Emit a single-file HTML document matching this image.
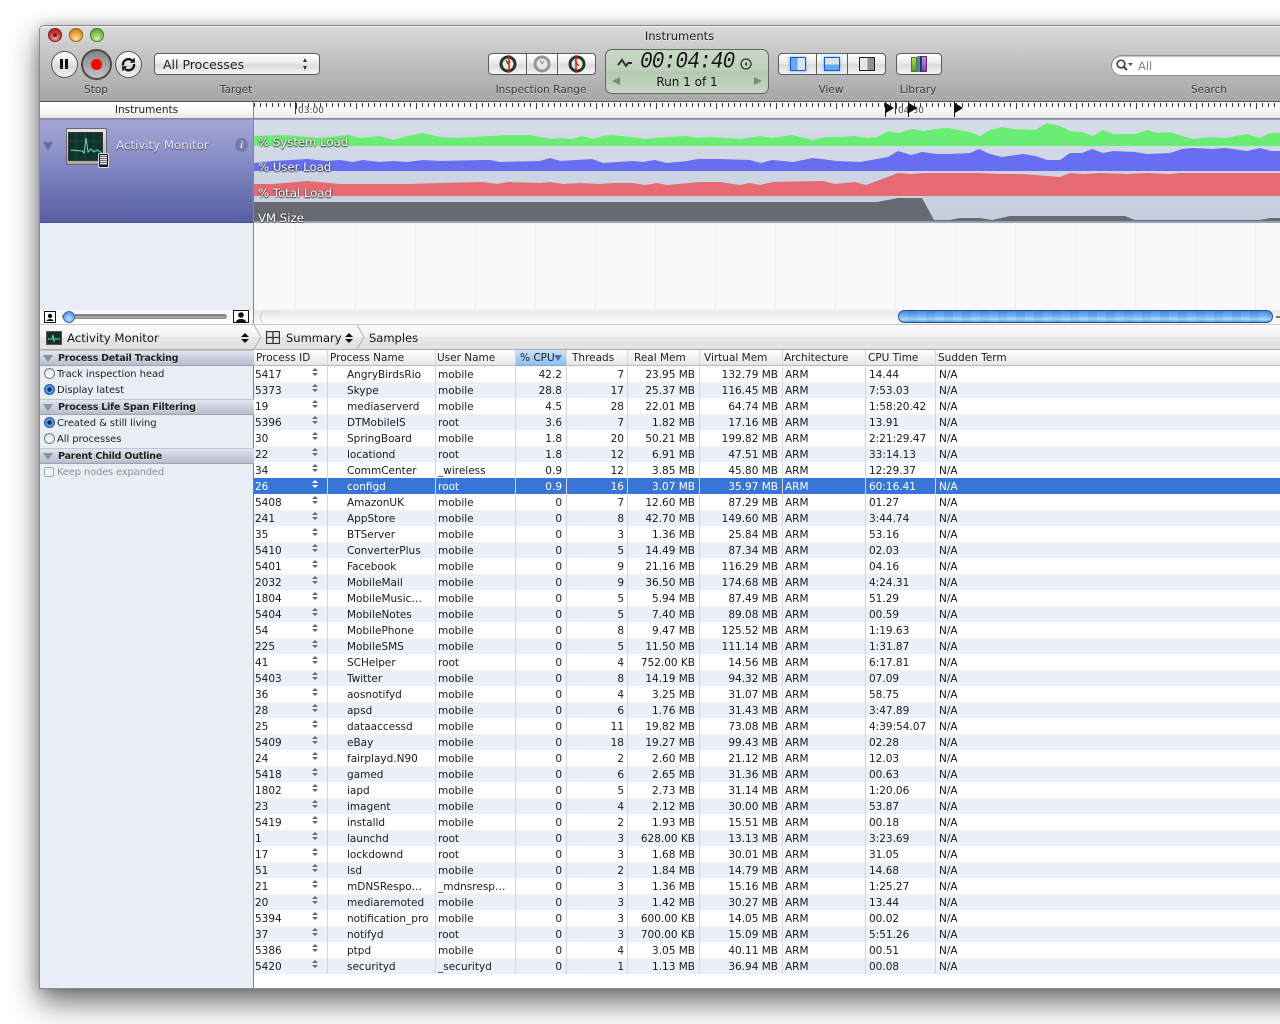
<!DOCTYPE html>
<html><head><meta charset="utf-8"><title>Instruments</title>
<style>
html,body{margin:0;padding:0;width:1280px;height:1024px;overflow:hidden;background:#fff}
body{position:relative;font-family:"DejaVu Sans","Liberation Sans",sans-serif;font-size:10.5px;color:#1a1a1a}
div,span,svg{position:absolute;box-sizing:border-box}
.t{white-space:nowrap;line-height:14px}
.lab{top:83px;font-size:10.5px;color:#3c3c3c;text-shadow:0 1px 0 rgba(255,255,255,.45);text-align:center;white-space:nowrap;line-height:14px}
#win{left:39px;top:25px;width:1300px;height:964px;background:#fff;border:1px solid #8a8a8a;border-radius:5px 0 0 0;box-shadow:0 14px 30px rgba(0,0,0,.55),0 0 12px rgba(0,0,0,.22)}
.btn{background:linear-gradient(#fff,#ececec 45%,#dcdcdc 55%,#f4f4f4);border:1px solid #5c5c5c;border-radius:4px}
.rb{border-radius:50%;background:linear-gradient(#fff,#e4e4e4 50%,#d6d6d6 55%,#f5f5f5);border:1px solid #555}
.gl{font-size:11.7px;color:#fff;white-space:nowrap;line-height:16px;text-shadow:0 1px 1px #333,0 0 2px #444;left:258px}
.sec{left:40px;width:214px;height:16px;background:linear-gradient(#e3e6f0,#c6cad9 60%,#b9bdcd);border-top:1px solid #c2c5d2;border-bottom:1px solid #9ea2b2;font-weight:bold;font-size:9.5px;letter-spacing:-.22px;line-height:15px;padding-left:18px;color:#222;text-shadow:0 1px 0 rgba(255,255,255,.5);white-space:nowrap}
.sec:before{content:"";position:absolute;left:3px;top:4px;border-left:5px solid transparent;border-right:5px solid transparent;border-top:7px solid #8b8e9b}
.it{left:57px;color:#222;font-size:10px;letter-spacing:-.08px;white-space:nowrap;line-height:14px}
.ra{left:44px;width:11px;height:11px;border-radius:50%;border:1px solid #777;background:linear-gradient(#dfdfdf,#fff)}
.ra.on{border-color:#2c5a9e;background:radial-gradient(circle,#10305f 0 2px,#6ea3e3 2.5px,#2f6fc9 100%)}
.h{top:351px;height:15px;font-size:10.5px;line-height:14px;white-space:nowrap;color:#222}
.vl{top:350px;width:1px;height:624px;background:#d6d6d6}
#t{left:254px;top:366px;width:1026px;height:608px;font-size:10.5px}
.r{position:relative;height:16px;width:1026px}
.r:nth-child(even){background:#ebf0fb}
.r.s{background:#3875d7!important;color:#fff}
.r i{position:absolute;top:1px;font-style:normal;line-height:16px;white-space:nowrap}
.r i:nth-child(1){left:1px}
.r i:nth-child(2){left:93px}
.r i:nth-child(3){left:184px}
.r i:nth-child(4){left:258px;width:50px;text-align:right}
.r i:nth-child(5){left:320px;width:50px;text-align:right}
.r i:nth-child(6){left:371px;width:70px;text-align:right}
.r i:nth-child(7){left:444px;width:80px;text-align:right}
.r i:nth-child(8){left:531px}
.r i:nth-child(9){left:615px}
.r i:nth-child(10){left:685px}
.r:before,.r:after{content:"";position:absolute;left:58px;border-left:3px solid transparent;border-right:3px solid transparent}
.r:before{top:2px;border-bottom:3px solid #666}
.r:after{top:7px;border-top:3px solid #666}
.r.s:before{border-bottom-color:#fff}.r.s:after{border-top-color:#fff}
.fl{top:102px;width:12px;height:15px}
</style></head><body>
<div id="win"></div>
<!-- toolbar -->
<div style="left:40px;top:26px;width:1240px;height:76px;background:linear-gradient(#dadada,#c6c6c6 35%,#a6a6a6);border-top:1px solid #eee;border-radius:4px 0 0 0"></div>
<div class="t" style="left:560px;width:239px;top:29px;text-align:center;font-size:11.5px;color:#222;text-shadow:0 1px 0 rgba(255,255,255,.5)">Instruments</div>
<div style="left:48px;top:28px;width:14px;height:14px;border-radius:50%;border:1px solid #7a2222;background:radial-gradient(circle at 50% 75%,#f5a0a0,#c8353a 55%,#8e1e22)"></div>
<div style="left:53px;top:33px;width:4px;height:4px;border-radius:50%;background:#7b2026"></div>
<div style="left:69px;top:28px;width:14px;height:14px;border-radius:50%;border:1px solid #96621c;background:radial-gradient(circle at 50% 80%,#fde1a0,#ee9f35 55%,#b3651d)"></div>
<div style="left:90px;top:28px;width:14px;height:14px;border-radius:50%;border:1px solid #4d7a2c;background:radial-gradient(circle at 50% 80%,#cdf0a5,#82c04e 55%,#4f8a2c)"></div>
<div class="rb" style="left:51px;top:51px;width:27px;height:27px"></div>
<div style="left:60px;top:59px;width:3px;height:10px;background:#111"></div>
<div style="left:65px;top:59px;width:3px;height:10px;background:#111"></div>
<div style="left:81px;top:49px;width:31px;height:31px;border-radius:50%;border:2px solid #4c4c4c;background:linear-gradient(#858585,#a2a2a2 50%,#c4c4c4)"></div>
<div style="left:91px;top:59px;width:11px;height:11px;border-radius:50%;background:#f00"></div>
<div class="rb" style="left:115px;top:51px;width:27px;height:27px"></div>
<svg style="left:115px;top:51px" width="27" height="27" viewBox="0 0 27 27"><path d="M8 14.5a5.5 5.5 0 0 1 9-5" fill="none" stroke="#111" stroke-width="2.4"/><path d="M19 13a5.500 5.500 0 0 1-9 5" fill="none" stroke="#111" stroke-width="2.4"/><path d="M15 12l5-.5-.5-5zM12 15l-5 .5.5 5z" fill="#111"/></svg>
<div class="btn" style="left:154px;top:53px;width:166px;height:22px;border-radius:4px"></div>
<div class="t" style="left:163px;top:58px;font-size:12.5px;color:#222">All Processes</div>
<div style="left:303px;top:58px;border-left:2.500px solid transparent;border-right:2.500px solid transparent;border-bottom:4px solid #333"></div>
<div style="left:303px;top:66px;border-left:2.500px solid transparent;border-right:2.500px solid transparent;border-top:4px solid #333"></div>
<div class="lab" style="left:66px;width:60px">Stop</div>
<div class="lab" style="left:196px;width:80px">Target</div>
<div class="lab" style="left:481px;width:120px">Inspection Range</div>
<div class="lab" style="left:801px;width:60px">View</div>
<div class="lab" style="left:888px;width:60px">Library</div>
<div class="lab" style="left:1169px;width:80px">Search</div>
<!-- inspection -->
<div class="btn" style="left:488px;top:53px;width:108px;height:22px"></div>
<div style="left:526px;top:54px;width:1px;height:20px;background:#5c5c5c"></div>
<div style="left:557px;top:54px;width:1px;height:20px;background:#5c5c5c"></div>
<svg style="left:498px;top:54px" width="90" height="20" viewBox="0 0 90 20">
<circle cx="10" cy="10" r="7" fill="#e8e8e8" stroke="#1f3a2a" stroke-width="3"/><path d="M10 10l-2-4M10 10l2-3" stroke="#333" stroke-width="1.200"/><path d="M11 1v18" stroke="#e01919" stroke-width="1.500"/>
<circle cx="44" cy="10" r="7" fill="#e8e8e8" stroke="#8d9a92" stroke-width="3"/><path d="M44 10l-2-4M44 10l2-3" stroke="#999" stroke-width="1.200"/>
<circle cx="79" cy="10" r="7" fill="#e8e8e8" stroke="#1f3a2a" stroke-width="3"/><path d="M79 10l-2-4M79 10l2 2" stroke="#333" stroke-width="1.200"/><path d="M78 1v18" stroke="#e01919" stroke-width="1.500"/>
</svg>
<!-- LCD -->
<div style="left:605px;top:49px;width:164px;height:45px;border-radius:7px;border:1px solid #666;background:linear-gradient(#c8d9c6,#bed0bb 48%,#b4c8b1 50%,#c6d7c4)"></div>
<div class="t" style="left:640px;top:51px;font-family:'Liberation Mono',monospace;font-style:italic;font-size:21px;line-height:24px;color:#161616;letter-spacing:-.8px;transform:scaleY(1.12)">00:04:40</div>
<svg style="left:617px;top:56px" width="16" height="14" viewBox="0 0 16 14"><path d="M1 9l4-5 4 6 2-3h4" fill="none" stroke="#333" stroke-width="2"/></svg>
<svg style="left:739px;top:57px" width="14" height="14" viewBox="0 0 14 14"><circle cx="7" cy="7" r="5" fill="none" stroke="#333" stroke-width="1.300"/><path d="M8 5v4L5.500 7z" fill="#333"/></svg>
<div class="t" style="left:606px;width:162px;top:75px;text-align:center;font-size:12px;color:#111">Run 1 of 1</div>
<div style="left:612px;top:77px;border-top:4px solid transparent;border-bottom:4px solid transparent;border-right:8px solid #7b8b7c"></div>
<div style="left:754px;top:77px;border-top:4px solid transparent;border-bottom:4px solid transparent;border-left:8px solid #7b8b7c"></div>
<!-- view buttons -->
<div class="btn" style="left:778px;top:53px;width:108px;height:22px"></div>
<div style="left:816px;top:54px;width:1px;height:20px;background:#5c5c5c"></div>
<div style="left:847px;top:54px;width:1px;height:20px;background:#5c5c5c"></div>
<div style="left:790px;top:57px;width:16px;height:14px;border:1px solid #0a5fd6;background:linear-gradient(90deg,#69a9ef 45%,#dce5ef 45%);box-shadow:0 0 3px #5fa8ff"></div>
<div style="left:824px;top:57px;width:16px;height:14px;border:1px solid #0a5fd6;background:linear-gradient(#dce5ef 55%,#69a9ef 55%);box-shadow:0 0 3px #5fa8ff"></div>
<div style="left:859px;top:57px;width:16px;height:14px;border:1px solid #222;background:linear-gradient(90deg,#e8e8e8 55%,#8f8f8f 55%)"></div>
<div class="btn" style="left:896px;top:53px;width:46px;height:22px"></div>
<div style="left:911px;top:57px;width:6px;height:15px;background:linear-gradient(#a8dc5a,#5a9c28);border:1px solid #4d7a22"></div>
<div style="left:917px;top:56px;width:4px;height:16px;background:#4c82c8;border-right:1px solid #234"></div>
<div style="left:921px;top:56px;width:6px;height:16px;background:linear-gradient(#c48ae0,#8b3fb8);border:1px solid #5c2a7c"></div>
<!-- search -->
<div style="left:1111px;top:55px;width:180px;height:21px;background:#fff;border-radius:11px 0 0 11px;border:1px solid #8f8f8f;box-shadow:inset 0 1px 1px #bbb"></div>
<svg style="left:1115px;top:58px" width="20" height="14" viewBox="0 0 20 14"><circle cx="6" cy="6" r="3.800" fill="none" stroke="#444" stroke-width="1.700"/><path d="M9 9l3 3" stroke="#444" stroke-width="2"/><path d="M13 5h5l-2.500 3z" fill="#555"/></svg>
<div class="t" style="left:1138px;top:59px;font-size:11.500px;color:#888">All</div>
<!-- ruler -->
<div style="left:40px;top:101px;width:1240px;height:1px;background:#555"></div>
<div style="left:40px;top:102px;width:213px;height:16px;background:linear-gradient(#fff,#f8f8f8 60%,#e6e6e6)"></div>
<div class="t" style="left:40px;width:213px;top:103px;text-align:center;font-size:10.500px;color:#222">Instruments</div>
<div style="left:253px;top:102px;width:1px;height:17px;background:#888"></div>
<div style="left:254px;top:102px;width:1026px;height:16px;background:repeating-linear-gradient(90deg,#333 0 1px,transparent 1px 6px) 0 1px/100% 4px no-repeat,repeating-linear-gradient(90deg,#333 0 1px,transparent 1px 60px) 42px 1px/100% 6px no-repeat,linear-gradient(#fff,#f8f8f8 60%,#e6e6e6)"></div>
<div style="left:295px;top:102px;width:1px;height:12px;background:#333"></div>
<div style="left:895px;top:102px;width:1px;height:12px;background:#333"></div>
<div class="t" style="left:298px;top:104px;font-size:9px;color:#444">03:00</div>
<div class="t" style="left:898px;top:104px;font-size:9px;color:#444">04:30</div>
<svg class="fl" style="left:885px" viewBox="0 0 12 15"><path d="M.5 0v15" stroke="#111"/><path d="M1 1l8 5-8 5z" fill="#111"/><path d="M1 11l6-3v2l-6 3z" fill="#fff"/></svg>
<svg class="fl" style="left:908px" viewBox="0 0 12 15"><path d="M.5 0v15" stroke="#111"/><path d="M1 1l8 5-8 5z" fill="#111"/><path d="M1 11l6-3v2l-6 3z" fill="#fff"/></svg>
<svg class="fl" style="left:954px" viewBox="0 0 12 15"><path d="M.5 0v15" stroke="#111"/><path d="M1 1l8 5-8 5z" fill="#111"/><path d="M1 11l6-3v2l-6 3z" fill="#fff"/></svg>
<div style="left:40px;top:118px;width:1240px;height:1px;background:#8b8b8b"></div>
<!-- instrument left -->
<div style="left:40px;top:119px;width:213px;height:104px;background:linear-gradient(#a3a7d7,#8a8fc8 35%,#565ea4);border-top:1px solid #8f93c4;border-bottom:1px solid #4a5190"></div>
<div style="left:253px;top:119px;width:1px;height:232px;background:#888"></div>
<div style="left:43px;top:142px;border-left:5px solid transparent;border-right:5px solid transparent;border-top:9px solid #6a6e94"></div>
<div style="left:66px;top:128px;width:41px;height:37px;background:linear-gradient(#e4e4e4,#aaa);border:1px solid #666;border-radius:2px"></div>
<div style="left:68px;top:132px;width:35px;height:29px;background:#10332c;border:1px solid #333"></div>
<svg style="left:68px;top:132px" width="35" height="29" viewBox="0 0 35 29"><path d="M0 9h35M0 19h35M8 0v29M17 0v29M26 0v29" stroke="#2b5a50" stroke-width=".5"/><path d="M3 18l11 1 2 2 2-15 2 14 3-3 3 3 3-2 5 3" fill="none" stroke="#5fe0b8" stroke-width="1"/></svg>
<div style="left:98px;top:153px;width:11px;height:15px;background:#111;border:1px solid #ddd;border-radius:2px"></div>
<div style="left:100px;top:155px;width:7px;height:10px;background:repeating-linear-gradient(#ddd 0 1px,#6b7b90 1px 2px)"></div>
<div class="t" style="left:116px;top:138px;font-size:11.8px;color:#e2e3f0;text-shadow:0 1px 1px #444">Activity Monitor</div>
<div style="left:235px;top:138px;width:13px;height:14px;border-radius:50%;background:#777ba6"></div>
<div class="t" style="left:235px;width:13px;top:138px;text-align:center;font:italic bold 11px/14px 'Liberation Serif',serif;color:#dde">i</div>
<!-- graphs -->
<div style="left:254px;top:119px;width:1026px;height:104px;background:linear-gradient(#d6dde9,#c4cedd);border-top:1px solid #8fa4c8;border-bottom:1px solid #8fa4c8"></div>
<svg style="left:0;top:0" width="1280" height="224" viewBox="0 0 1280 224">
<path fill="#69ee73" d="M254 136L287 135 317 138 350 135 360 138 380 136 393 140 407 136 423 133 440 137 457 138 507 135 530 135 550 139 560 138 572 139 582 136 593 139 603 136 613 135 630 137 645 139 667 137 687 136 698 138 710 137 740 139 760 136 772 138 792 135 813 140 825 137 837 137 855 136 867 138 877 137 888 131 898 133 912 129 923 131 935 129 948 128 970 132 980 136 990 130 1002 127 1013 129 1035 130 1047 123 1060 126 1070 131 1082 132 1093 136 1103 130 1113 134 1136 134 1147 130 1158 133 1170 132 1182 136 1193 139 1213 137 1225 138 1247 134 1260 138 1270 133 1280 133V146H254z"/>
<path fill="#676ef2" d="M254 163L273 161 307 159 327 161 340 160 353 162 363 160 380 162 393 161 407 162 423 160 440 161 483 160 490 160 500 162 540 161 550 158 560 161 592 159 603 163 633 161 643 162 655 160 667 163 687 161 698 159 720 159 750 160 761 163 772 160 793 162 813 158 837 161 860 162 877 159 888 157 898 151 911 155 922 152 937 154 950 154 970 153 979 149 990 154 1002 157 1023 154 1035 156 1047 160 1060 160 1070 153 1082 153 1092 149 1103 153 1113 151 1135 152 1147 154 1170 153 1182 149 1193 148 1213 149 1225 148 1247 151 1260 148 1271 151 1280 151V171H254z"/>
<path fill="#e76a72" d="M254 184L273 184 307 181 340 184 373 184 407 184 440 183 483 182 497 184 508 182 540 183 550 182 563 184 580 183 600 184 613 183 633 183 645 185 657 183 667 185 700 182 720 182 740 185 750 183 760 185 773 182 823 181 835 184 855 182 866 185 877 181 898 173 912 174 923 173 977 173 1003 174 1023 174 1060 177 1070 173 1083 174 1100 173 1127 174 1147 173 1170 174 1180 173 1280 173V196H254z"/>
<path fill="#676a72" d="M254 202H877L898 198 922 198 934 220 950 220 960 218 980 218 992 220 1010 216 1125 216 1135 220 1260 220 1270 218 1280 218V221.500H254z"/>
</svg>
<div class="gl" style="top:134px">% System Load</div>
<div class="gl" style="top:159px">% User Load</div>
<div class="gl" style="top:185px">% Total Load</div>
<div class="gl" style="top:210px">VM Size</div>
<!-- empty area -->
<div style="left:40px;top:223px;width:213px;height:87px;background:#e9edf6"></div>
<div style="left:254px;top:223px;width:1026px;height:87px;background-color:#fbf8fb"></div>
<div style="left:295px;top:223px;width:985px;height:87px;background:repeating-linear-gradient(90deg,#f0edf1 0 1px,#fbf8fb 1px 60px)"></div>
<div style="left:40px;top:310px;width:213px;height:14px;background:linear-gradient(#f6f6f6,#fff)"></div>
<svg style="left:44px;top:311px" width="12" height="12" viewBox="0 0 12 12"><rect x=".5" y=".5" width="11" height="11" fill="#fff" stroke="#111"/><circle cx="6" cy="5" r="2.200" fill="#111"/><path d="M2.500 10c0-2.500 7-2.500 7 0z" fill="#111"/></svg>
<div style="left:62px;top:314px;width:165px;height:5px;border-radius:3px;background:linear-gradient(#777,#bbb);border:1px solid #888"></div>
<div style="left:63px;top:311px;width:12px;height:12px;border-radius:50%;background:radial-gradient(circle at 50% 70%,#bfe0ff,#3e86dc);border:1px solid #3a6bb0"></div>
<svg style="left:233px;top:310px" width="16" height="13" viewBox="0 0 16 13"><rect x=".5" y=".5" width="15" height="12" fill="#fff" stroke="#111"/><circle cx="8" cy="5" r="2.800" fill="#111"/><path d="M3 12c0-4 10-4 10 0z" fill="#111"/></svg>
<div style="left:254px;top:310px;width:1026px;height:14px;background:linear-gradient(#e9e9e9,#fafafa)"></div>
<div style="left:260px;top:310px;width:20px;height:14px;border-radius:7px 0 0 7px;border-left:1px solid #c4c4c4;background:linear-gradient(#e2e2e2,#fff)"></div>
<div style="left:898px;top:310px;width:375px;height:13px;border-radius:7px;border:1px solid #1d4f9c;background:repeating-linear-gradient(90deg,rgba(255,255,255,.05) 0 9px,rgba(20,70,170,.05) 9px 18px),linear-gradient(#3f86de,#6fb0ee 45%,#a9d5f8 75%,#5c9be0)"></div>
<div style="left:1276px;top:316px;width:4px;height:2px;background:#777"></div>
<div style="left:40px;top:324px;width:1240px;height:1px;background:#c8c8c8"></div>
<!-- breadcrumb -->
<div style="left:40px;top:325px;width:1240px;height:25px;background:linear-gradient(#fbfbfb,#f3f3f3 48%,#e6e6e6 50%,#e2e2e2);border-bottom:1px solid #aaa"></div>
<div style="left:46px;top:331px;width:16px;height:14px;background:#16302b;border:1px solid #555"></div>
<svg style="left:46px;top:331px" width="16" height="14" viewBox="0 0 16 14"><path d="M2 8h4l1-4 1 6 1-2h5" fill="none" stroke="#5fe0b8"/></svg>
<div class="t" style="left:67px;top:331px;font-size:11.700px">Activity Monitor</div>
<div style="left:241px;top:333px;border-left:4px solid transparent;border-right:4px solid transparent;border-bottom:4px solid #111"></div>
<div style="left:241px;top:339px;border-left:4px solid transparent;border-right:4px solid transparent;border-top:4px solid #111"></div>
<svg style="left:252px;top:325px" width="120" height="24" viewBox="0 0 120 24"><path d="M2 0l7 12-7 12M105 0l7 12-7 12" fill="none" stroke="#b4b4b4"/></svg>
<svg style="left:266px;top:331px" width="14" height="13" viewBox="0 0 14 13"><path d="M.5.500h13v12H.500zM7 .5v12M.5 6.500h13" fill="#e8e8e8" stroke="#333" stroke-width="1.300"/></svg>
<div class="t" style="left:286px;top:331px;font-size:11.500px">Summary</div>
<div style="left:345px;top:333px;border-left:4px solid transparent;border-right:4px solid transparent;border-bottom:4px solid #111"></div>
<div style="left:345px;top:339px;border-left:4px solid transparent;border-right:4px solid transparent;border-top:4px solid #111"></div>
<div class="t" style="left:369px;top:331px;font-size:11.500px">Samples</div>
<!-- sidebar -->
<div style="left:40px;top:350px;width:213px;height:638px;background:#e9edf6"></div>
<div style="left:253px;top:350px;width:1px;height:638px;background:#808080"></div>
<div class="sec" style="top:350px">Process Detail Tracking</div>
<div class="ra" style="top:368px"></div><div class="it" style="top:368px">Track inspection head</div>
<div class="ra on" style="top:384px"></div><div class="it" style="top:384px">Display latest</div>
<div class="sec" style="top:399px">Process Life Span Filtering</div>
<div class="ra on" style="top:417px"></div><div class="it" style="top:417px">Created &amp; still living</div>
<div class="ra" style="top:433px"></div><div class="it" style="top:433px">All processes</div>
<div class="sec" style="top:448px">Parent Child Outline</div>
<div style="left:44px;top:467px;width:10px;height:10px;border:1px solid #aaa;border-radius:2px;background:#f2f2f2"></div>
<div class="it" style="top:466px;color:#929292;letter-spacing:-.2px">Keep nodes expanded</div>
<!-- header -->
<div style="left:254px;top:350px;width:1026px;height:16px;background:linear-gradient(#fff,#f3f3f3 50%,#e6e6e6);border-bottom:1px solid #b8b8b8"></div>
<div style="left:515px;top:350px;width:51px;height:16px;background:linear-gradient(#cfe3f9,#a9cff4 50%,#8fc0f0);border-bottom:1px solid #7ba7d8"></div>
<div class="h" style="left:256px">Process ID</div>
<div class="h" style="left:330px">Process Name</div>
<div class="h" style="left:437px">User Name</div>
<div class="h" style="left:520px">% CPU</div>
<div style="left:554px;top:355px;border-left:4px solid transparent;border-right:4px solid transparent;border-top:6px solid #4a70a0"></div>
<div class="h" style="left:572px">Threads</div>
<div class="h" style="left:634px">Real Mem</div>
<div class="h" style="left:704px">Virtual Mem</div>
<div class="h" style="left:784px">Architecture</div>
<div class="h" style="left:868px">CPU Time</div>
<div class="h" style="left:938px">Sudden Term</div>
<!-- table -->
<div id="t">
<div class="r"><i>5417</i><i>AngryBirdsRio</i><i>mobile</i><i>42.2</i><i>7</i><i>23.95 MB</i><i>132.79 MB</i><i>ARM</i><i>14.44</i><i>N/A</i></div>
<div class="r"><i>5373</i><i>Skype</i><i>mobile</i><i>28.8</i><i>17</i><i>25.37 MB</i><i>116.45 MB</i><i>ARM</i><i>7:53.03</i><i>N/A</i></div>
<div class="r"><i>19</i><i>mediaserverd</i><i>mobile</i><i>4.5</i><i>28</i><i>22.01 MB</i><i>64.74 MB</i><i>ARM</i><i>1:58:20.42</i><i>N/A</i></div>
<div class="r"><i>5396</i><i>DTMobileIS</i><i>root</i><i>3.6</i><i>7</i><i>1.82 MB</i><i>17.16 MB</i><i>ARM</i><i>13.91</i><i>N/A</i></div>
<div class="r"><i>30</i><i>SpringBoard</i><i>mobile</i><i>1.8</i><i>20</i><i>50.21 MB</i><i>199.82 MB</i><i>ARM</i><i>2:21:29.47</i><i>N/A</i></div>
<div class="r"><i>22</i><i>locationd</i><i>root</i><i>1.8</i><i>12</i><i>6.91 MB</i><i>47.51 MB</i><i>ARM</i><i>33:14.13</i><i>N/A</i></div>
<div class="r"><i>34</i><i>CommCenter</i><i>_wireless</i><i>0.9</i><i>12</i><i>3.85 MB</i><i>45.80 MB</i><i>ARM</i><i>12:29.37</i><i>N/A</i></div>
<div class="r s"><i>26</i><i>configd</i><i>root</i><i>0.9</i><i>16</i><i>3.07 MB</i><i>35.97 MB</i><i>ARM</i><i>60:16.41</i><i>N/A</i></div>
<div class="r"><i>5408</i><i>AmazonUK</i><i>mobile</i><i>0</i><i>7</i><i>12.60 MB</i><i>87.29 MB</i><i>ARM</i><i>01.27</i><i>N/A</i></div>
<div class="r"><i>241</i><i>AppStore</i><i>mobile</i><i>0</i><i>8</i><i>42.70 MB</i><i>149.60 MB</i><i>ARM</i><i>3:44.74</i><i>N/A</i></div>
<div class="r"><i>35</i><i>BTServer</i><i>mobile</i><i>0</i><i>3</i><i>1.36 MB</i><i>25.84 MB</i><i>ARM</i><i>53.16</i><i>N/A</i></div>
<div class="r"><i>5410</i><i>ConverterPlus</i><i>mobile</i><i>0</i><i>5</i><i>14.49 MB</i><i>87.34 MB</i><i>ARM</i><i>02.03</i><i>N/A</i></div>
<div class="r"><i>5401</i><i>Facebook</i><i>mobile</i><i>0</i><i>9</i><i>21.16 MB</i><i>116.29 MB</i><i>ARM</i><i>04.16</i><i>N/A</i></div>
<div class="r"><i>2032</i><i>MobileMail</i><i>mobile</i><i>0</i><i>9</i><i>36.50 MB</i><i>174.68 MB</i><i>ARM</i><i>4:24.31</i><i>N/A</i></div>
<div class="r"><i>1804</i><i>MobileMusic…</i><i>mobile</i><i>0</i><i>5</i><i>5.94 MB</i><i>87.49 MB</i><i>ARM</i><i>51.29</i><i>N/A</i></div>
<div class="r"><i>5404</i><i>MobileNotes</i><i>mobile</i><i>0</i><i>5</i><i>7.40 MB</i><i>89.08 MB</i><i>ARM</i><i>00.59</i><i>N/A</i></div>
<div class="r"><i>54</i><i>MobilePhone</i><i>mobile</i><i>0</i><i>8</i><i>9.47 MB</i><i>125.52 MB</i><i>ARM</i><i>1:19.63</i><i>N/A</i></div>
<div class="r"><i>225</i><i>MobileSMS</i><i>mobile</i><i>0</i><i>5</i><i>11.50 MB</i><i>111.14 MB</i><i>ARM</i><i>1:31.87</i><i>N/A</i></div>
<div class="r"><i>41</i><i>SCHelper</i><i>root</i><i>0</i><i>4</i><i>752.00 KB</i><i>14.56 MB</i><i>ARM</i><i>6:17.81</i><i>N/A</i></div>
<div class="r"><i>5403</i><i>Twitter</i><i>mobile</i><i>0</i><i>8</i><i>14.19 MB</i><i>94.32 MB</i><i>ARM</i><i>07.09</i><i>N/A</i></div>
<div class="r"><i>36</i><i>aosnotifyd</i><i>mobile</i><i>0</i><i>4</i><i>3.25 MB</i><i>31.07 MB</i><i>ARM</i><i>58.75</i><i>N/A</i></div>
<div class="r"><i>28</i><i>apsd</i><i>mobile</i><i>0</i><i>6</i><i>1.76 MB</i><i>31.43 MB</i><i>ARM</i><i>3:47.89</i><i>N/A</i></div>
<div class="r"><i>25</i><i>dataaccessd</i><i>mobile</i><i>0</i><i>11</i><i>19.82 MB</i><i>73.08 MB</i><i>ARM</i><i>4:39:54.07</i><i>N/A</i></div>
<div class="r"><i>5409</i><i>eBay</i><i>mobile</i><i>0</i><i>18</i><i>19.27 MB</i><i>99.43 MB</i><i>ARM</i><i>02.28</i><i>N/A</i></div>
<div class="r"><i>24</i><i>fairplayd.N90</i><i>mobile</i><i>0</i><i>2</i><i>2.60 MB</i><i>21.12 MB</i><i>ARM</i><i>12.03</i><i>N/A</i></div>
<div class="r"><i>5418</i><i>gamed</i><i>mobile</i><i>0</i><i>6</i><i>2.65 MB</i><i>31.36 MB</i><i>ARM</i><i>00.63</i><i>N/A</i></div>
<div class="r"><i>1802</i><i>iapd</i><i>mobile</i><i>0</i><i>5</i><i>2.73 MB</i><i>31.14 MB</i><i>ARM</i><i>1:20.06</i><i>N/A</i></div>
<div class="r"><i>23</i><i>imagent</i><i>mobile</i><i>0</i><i>4</i><i>2.12 MB</i><i>30.00 MB</i><i>ARM</i><i>53.87</i><i>N/A</i></div>
<div class="r"><i>5419</i><i>installd</i><i>mobile</i><i>0</i><i>2</i><i>1.93 MB</i><i>15.51 MB</i><i>ARM</i><i>00.18</i><i>N/A</i></div>
<div class="r"><i>1</i><i>launchd</i><i>root</i><i>0</i><i>3</i><i>628.00 KB</i><i>13.13 MB</i><i>ARM</i><i>3:23.69</i><i>N/A</i></div>
<div class="r"><i>17</i><i>lockdownd</i><i>root</i><i>0</i><i>3</i><i>1.68 MB</i><i>30.01 MB</i><i>ARM</i><i>31.05</i><i>N/A</i></div>
<div class="r"><i>51</i><i>lsd</i><i>mobile</i><i>0</i><i>2</i><i>1.84 MB</i><i>14.79 MB</i><i>ARM</i><i>14.68</i><i>N/A</i></div>
<div class="r"><i>21</i><i>mDNSRespo…</i><i>_mdnsresp…</i><i>0</i><i>3</i><i>1.36 MB</i><i>15.16 MB</i><i>ARM</i><i>1:25.27</i><i>N/A</i></div>
<div class="r"><i>20</i><i>mediaremoted</i><i>mobile</i><i>0</i><i>3</i><i>1.42 MB</i><i>30.27 MB</i><i>ARM</i><i>13.44</i><i>N/A</i></div>
<div class="r"><i>5394</i><i>notification_pro</i><i>mobile</i><i>0</i><i>3</i><i>600.00 KB</i><i>14.05 MB</i><i>ARM</i><i>00.02</i><i>N/A</i></div>
<div class="r"><i>37</i><i>notifyd</i><i>root</i><i>0</i><i>3</i><i>700.00 KB</i><i>15.09 MB</i><i>ARM</i><i>5:51.26</i><i>N/A</i></div>
<div class="r"><i>5386</i><i>ptpd</i><i>mobile</i><i>0</i><i>4</i><i>3.05 MB</i><i>40.11 MB</i><i>ARM</i><i>00.51</i><i>N/A</i></div>
<div class="r"><i>5420</i><i>securityd</i><i>_securityd</i><i>0</i><i>1</i><i>1.13 MB</i><i>36.94 MB</i><i>ARM</i><i>00.08</i><i>N/A</i></div>
</div>
<div class="vl" style="left:327px"></div><div class="vl" style="left:435px"></div><div class="vl" style="left:515px"></div><div class="vl" style="left:566px"></div><div class="vl" style="left:627px"></div><div class="vl" style="left:699px"></div><div class="vl" style="left:782px"></div><div class="vl" style="left:865px"></div><div class="vl" style="left:935px"></div>
</body></html>
